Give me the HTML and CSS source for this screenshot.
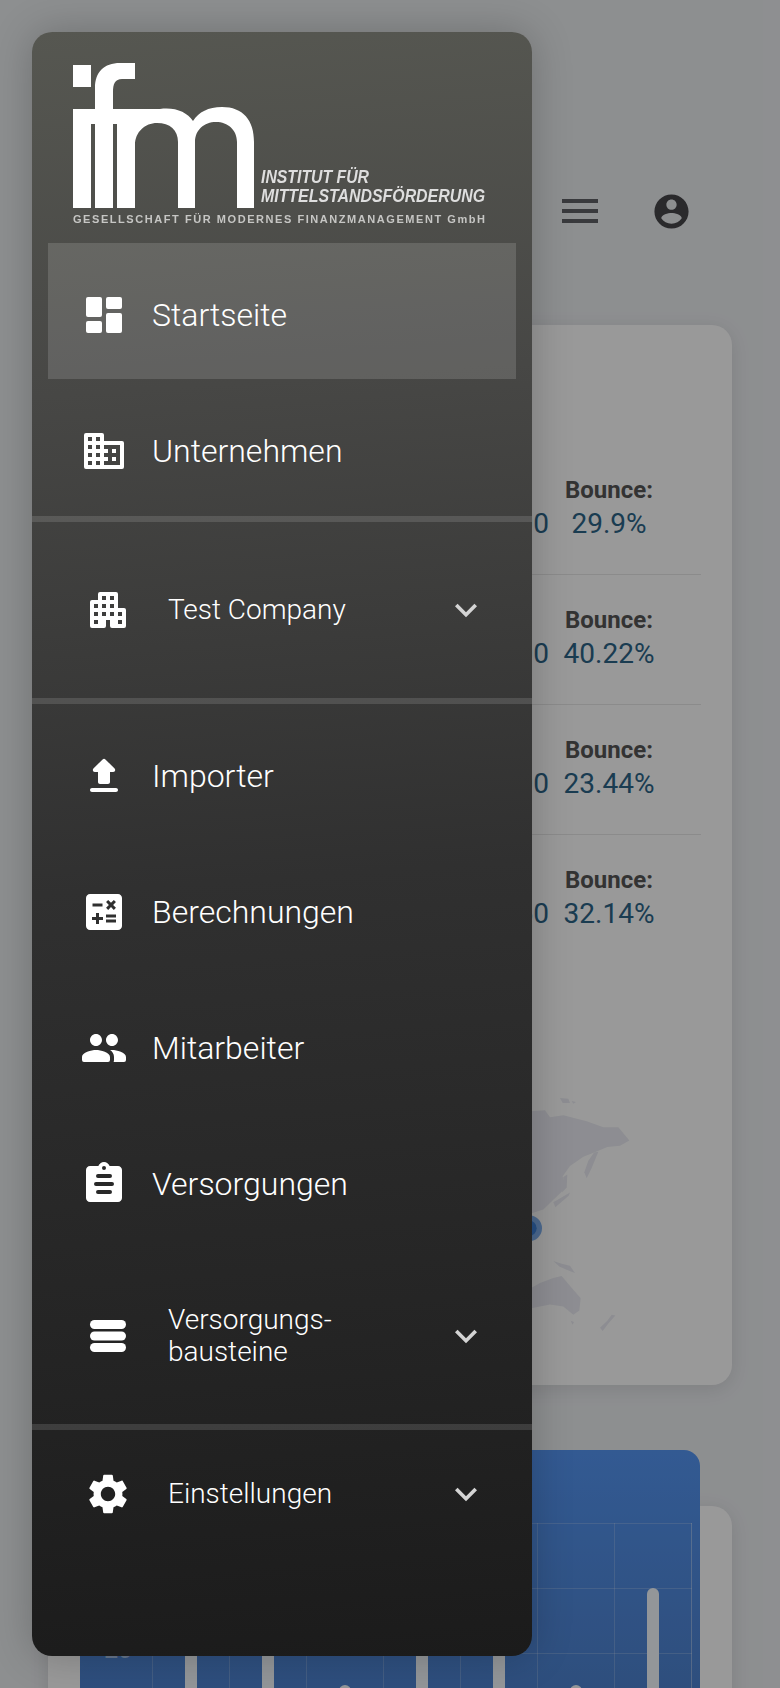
FILE: index.html
```html
<!DOCTYPE html>
<html lang="de">
<head>
<meta charset="utf-8">
<title>IFM Startseite</title>
<link rel="stylesheet" href="styles.css">
</head>
<body>
<div class="page">
  <header class="topbar">
    <div class="burger"><span></span><span></span><span></span></div>
    <svg class="avatar" viewBox="0 0 24 24"><path d="M12 2C6.48 2 2 6.48 2 12s4.48 10 10 10 10-4.48 10-10S17.52 2 12 2zm0 3c1.66 0 3 1.34 3 3s-1.34 3-3 3-3-1.34-3-3 1.34-3 3-3zm0 14.2c-2.5 0-4.71-1.28-6-3.22.03-1.99 4-3.08 6-3.08 1.99 0 5.97 1.09 6 3.08-1.29 1.94-3.5 3.22-6 3.22z"/></svg>
  </header>

  <section class="card card-stats">
    <div class="stat-row">
      <div class="stat"><strong>Users:</strong><span>132300</span></div>
      <div class="stat stat-bounce"><strong>Bounce:</strong><span>29.9%</span></div>
    </div>
    <div class="stat-row">
      <div class="stat"><strong>Users:</strong><span>127100</span></div>
      <div class="stat stat-bounce"><strong>Bounce:</strong><span>40.22%</span></div>
    </div>
    <div class="stat-row">
      <div class="stat"><strong>Users:</strong><span>119900</span></div>
      <div class="stat stat-bounce"><strong>Bounce:</strong><span>23.44%</span></div>
    </div>
    <div class="stat-row">
      <div class="stat"><strong>Users:</strong><span>111560</span></div>
      <div class="stat stat-bounce"><strong>Bounce:</strong><span>32.14%</span></div>
    </div>
    <svg class="map" viewBox="0 0 330 700" preserveAspectRatio="none">
      <path d="M0 155L40 150 75 148 90 165 130 160 200 175 250 190 295 190 328 222 300 235 262 238 228 250 190 262 150 285 128 310 135 340 100 368 70 392 0 410z"/>
      <path d="M222 252L235 250 215 290 200 315 193 300 205 272z"/>
      <path d="M130 312L142 306 140 338 126 350z"/>
      <path d="M100 374L150 350 146 358 106 386z"/>
      <path d="M120 118L145 120 150 130 128 130zM155 125L168 128 160 132z"/>
      <path d="M100 518L125 525 150 530 165 548 140 540 118 532z"/>
      <path d="M0 600L60 572 100 560 125 555 145 575 182 610 178 640 160 650 130 630 90 625 30 635 0 640zM152 665L162 668 158 675z"/>
      <path d="M240 682L262 665 275 650 286 652 265 672 248 690z"/>
      <ellipse class="map-halo" cx="27" cy="438" rx="39" ry="32"/>
      <ellipse class="map-dot" cx="27" cy="438" rx="23" ry="19"/>
    </svg>
  </section>

  <section class="card card-chart">
    <div class="panel">
      <div class="y-axis"><span>20</span></div>
      <div class="chart">
        <i class="bar" style="height: 130px"></i>
        <i class="bar" style="height: 130px"></i>
        <i class="bar" style="height: 65px"></i>
        <i class="bar" style="height: 130px"></i>
        <i class="bar" style="height: 130px"></i>
        <i class="bar" style="height: 65px"></i>
        <i class="bar" style="height: 162px"></i>
      </div>
    </div>
  </section>

  <div class="scrim"></div>

  <aside class="drawer">
    <svg class="logo" viewBox="32 32 500 211" role="img" aria-label="ifm Institut für Mittelstandsförderung">
      <g class="logo-mark">
        <rect x="73" y="65" width="18" height="22"/>
        <path d="M73 109H95V88C95 72 104 63 120 63H135V79H122C115 79 113 84 113 92V109H135V124H113V208H95V124H91V208H73z"/>
        <path d="M117 208V109H160C175 107 187 112 193 121 199 112 208 107 222 107 243 107 254 120 254 142V208H237V142C237 130 228 122 216 122 204 122 195 130 195 142V208H178V142C178 130 170 123 157 123 145 123 135 132 135 145V208z"/>
      </g>
      <text class="logo-title" x="261" y="183" textLength="108" lengthAdjust="spacingAndGlyphs">INSTITUT FÜR</text>
      <text class="logo-title" x="261" y="202" textLength="224" lengthAdjust="spacingAndGlyphs">MITTELSTANDSFÖRDERUNG</text>
      <text class="logo-sub" x="73" y="223" textLength="412">GESELLSCHAFT FÜR MODERNES FINANZMANAGEMENT GmbH</text>
    </svg>

    <nav class="nav">
      <a class="item item-offset active">
        <svg class="icon" viewBox="0 0 24 24"><rect x="3" y="3" width="8" height="10" rx="1"/><rect x="3" y="15" width="8" height="6" rx="1"/><rect x="13" y="11" width="8" height="10" rx="1"/><rect x="13" y="3" width="8" height="6" rx="1"/></svg>
        <span>Startseite</span>
      </a>
      <a class="item item-offset">
        <svg class="icon" viewBox="0 0 24 24"><path d="M12 7V4a1 1 0 0 0-1-1H3a1 1 0 0 0-1 1v16a1 1 0 0 0 1 1h18a1 1 0 0 0 1-1V8a1 1 0 0 0-1-1H12zM6 19H4v-2h2v2zm0-4H4v-2h2v2zm0-4H4V9h2v2zm0-4H4V5h2v2zm4 12H8v-2h2v2zm0-4H8v-2h2v2zm0-4H8V9h2v2zm0-4H8V5h2v2zm10 12h-8v-2h2v-2h-2v-2h2v-2h-2V9h8v10zm-2-8h-2v2h2v-2zm0 4h-2v2h2v-2z"/></svg>
        <span>Unternehmen</span>
      </a>
      <hr class="rule rule-first">
      <a class="group group-company">
        <svg class="icon" viewBox="0 0 24 24"><path d="M17 11V4a1 1 0 0 0-1-1H8a1 1 0 0 0-1 1v3H4a1 1 0 0 0-1 1v12a1 1 0 0 0 1 1h6a1 1 0 0 0 1-1v-3h2v3a1 1 0 0 0 1 1h6a1 1 0 0 0 1-1v-8a1 1 0 0 0-1-1h-3zM7 19H5v-2h2v2zm0-4H5v-2h2v2zm0-4H5V9h2v2zm4 4H9v-2h2v2zm0-4H9V9h2v2zm0-4H9V5h2v2zm4 8h-2v-2h2v2zm0-4h-2V9h2v2zm0-4h-2V5h2v2zm4 12h-2v-2h2v2zm0-4h-2v-2h2v2z"/></svg>
        <span class="group-label">Test Company</span>
        <svg class="chevron" viewBox="0 0 24 24"><path d="M7.41 8.59L12 13.17l4.59-4.58L18 10l-6 6-6-6z"/></svg>
      </a>
      <hr class="rule rule-second">
      <a class="item">
        <svg class="icon" viewBox="0 0 24 24"><path d="M10 16h4c.55 0 1-.45 1-1v-5h1.59c.89 0 1.34-1.08.71-1.71L12.71 3.7c-.39-.39-1.02-.39-1.41 0L6.71 8.29c-.63.63-.19 1.71.7 1.71H9v5c0 .55.45 1 1 1zm-4 2h12c.55 0 1 .45 1 1s-.45 1-1 1H6c-.55 0-1-.45-1-1s.45-1 1-1z"/></svg>
        <span>Importer</span>
      </a>
      <a class="item">
        <svg class="icon" viewBox="0 0 24 24"><path d="M19 3H5c-1.1 0-2 .9-2 2v14c0 1.1.9 2 2 2h14c1.1 0 2-.9 2-2V5c0-1.1-.9-2-2-2zm-5.97 4.06L14.09 6l1.41 1.41L16.91 6l1.06 1.06-1.41 1.41 1.41 1.41-1.06 1.06-1.41-1.4-1.41 1.41-1.06-1.06 1.41-1.41-1.41-1.42zm-6.78.66h5v1.5h-5v-1.5zM11.5 16h-2v2H8v-2H6v-1.5h2v-2h1.5v2h2V16zm6.5 1.25h-5v-1.5h5v1.5zm0-2.5h-5v-1.5h5v1.5z"/></svg>
        <span>Berechnungen</span>
      </a>
      <a class="item">
        <svg class="icon" viewBox="0 0 24 24"><path d="M16 11c1.66 0 2.99-1.34 2.99-3S17.66 5 16 5c-1.66 0-3 1.34-3 3s1.34 3 3 3zm-8 0c1.66 0 2.99-1.34 2.99-3S9.66 5 8 5C6.34 5 5 6.34 5 8s1.34 3 3 3zm0 2c-2.33 0-7 1.17-7 3.5V18a1 1 0 0 0 1 1h12a1 1 0 0 0 1-1v-1.5c0-2.33-4.67-3.5-7-3.5zm8 0c-.29 0-.62.02-.97.05 1.16.84 1.97 1.97 1.97 3.45V18c0 .35-.07.69-.18 1H22a1 1 0 0 0 1-1v-1.5c0-2.33-4.67-3.5-7-3.5z"/></svg>
        <span>Mitarbeiter</span>
      </a>
      <a class="item">
        <svg class="icon" viewBox="0 0 24 24"><path fill-rule="evenodd" d="M19 3h-4.18C14.4 1.84 13.3 1 12 1c-1.3 0-2.4.84-2.82 2H5c-1.1 0-2 .9-2 2v14c0 1.1.9 2 2 2h14c1.1 0 2-.9 2-2V5c0-1.1-.9-2-2-2zM12 3a1 1 0 1 1 0 2 1 1 0 0 1 0-2zM9 7h6a1 1 0 0 1 0 2H9a1 1 0 0 1 0-2zM8 11h8a1 1 0 0 1 0 2H8a1 1 0 0 1 0-2zM9 15h6a1 1 0 0 1 0 2H9a1 1 0 0 1 0-2z"/></svg>
        <span>Versorgungen</span>
      </a>
      <a class="group group-modules">
        <svg class="icon" viewBox="0 0 24 24"><rect x="3" y="4" width="18" height="4.5" rx="2.25"/><rect x="3" y="9.75" width="18" height="4.5" rx="2.25"/><rect x="3" y="15.5" width="18" height="4.5" rx="2.25"/></svg>
        <span class="group-label">Versorgungs-<br>bausteine</span>
        <svg class="chevron" viewBox="0 0 24 24"><path d="M7.41 8.59L12 13.17l4.59-4.58L18 10l-6 6-6-6z"/></svg>
      </a>
      <hr class="rule">
      <a class="group group-settings">
        <svg class="icon" viewBox="0 0 24 24"><path d="M19.14 12.94c.04-.3.06-.61.06-.94 0-.32-.02-.64-.07-.94l2.03-1.58c.18-.14.23-.41.12-.61l-1.92-3.32c-.12-.22-.37-.29-.59-.22l-2.39.96c-.5-.38-1.03-.7-1.62-.94l-.36-2.54c-.04-.24-.24-.41-.48-.41h-3.84c-.24 0-.43.17-.47.41l-.36 2.54c-.59.24-1.13.57-1.62.94l-2.39-.96c-.22-.08-.47 0-.59.22L2.74 8.87c-.12.21-.08.47.12.61l2.03 1.58c-.05.3-.09.63-.09.94s.02.64.07.94l-2.03 1.58c-.18.14-.23.41-.12.61l1.92 3.32c.12.22.37.29.59.22l2.39-.96c.5.38 1.03.7 1.62.94l.36 2.54c.05.24.24.41.48.41h3.84c.24 0 .44-.17.47-.41l.36-2.54c.59-.24 1.13-.56 1.62-.94l2.39.96c.22.08.47 0 .59-.22l1.92-3.32c.12-.22.07-.47-.12-.61l-2.01-1.58zM12 15.6c-1.98 0-3.6-1.62-3.6-3.6s1.62-3.6 3.6-3.6 3.6 1.62 3.6 3.6-1.62 3.6-3.6 3.6z"/></svg>
        <span class="group-label">Einstellungen</span>
        <svg class="chevron" viewBox="0 0 24 24"><path d="M7.41 8.59L12 13.17l4.59-4.58L18 10l-6 6-6-6z"/></svg>
      </a>
    </nav>
  </aside>
</div>
</body>
</html>
```
FILE: styles.css
```css
* { box-sizing: border-box; }
html, body { margin: 0; padding: 0; }
body { font-family: Roboto, "Liberation Sans", sans-serif; }

.page {
  position: relative;
  width: 780px;
  height: 1688px;
  overflow: hidden;
  padding: 0 48px;
  background: #eceef1;
}

/* page behind the drawer */
.topbar {
  display: flex;
  justify-content: flex-end;
  align-items: flex-end;
  gap: 53px;
  height: 325px;
  padding: 0 40px 93px 0;
}
.burger { display: flex; flex-direction: column; gap: 6px; width: 36px; margin-bottom: 9px; }
.burger span { height: 4px; background: #606266; }
.avatar { width: 41px; height: 41px; fill: #46474a; }

.card {
  background: #fff;
  border-radius: 20px;
  box-shadow: 0 4px 20px rgba(0, 0, 0, .1);
}
.card-stats {
  height: 1060px;
  padding: 120px 31px 0;
}
.stat-row {
  display: flex;
  justify-content: flex-end;
  gap: 10px;
  height: 130px;
  padding-top: 30px;
  padding-right: 42px;
  border-bottom: 1px solid #e8e8e8;
}
.stat-row:nth-child(4) { border-bottom: 0; }
.stat {
  display: flex;
  flex-direction: column;
  align-items: flex-end;
  gap: 4px;
  width: 120px;
  font-size: 28px;
  line-height: 30px;
  color: #2c6488;
}
.stat strong { align-self: flex-start; font-size: 24px; color: #555; font-weight: 700; }
.stat-bounce { align-items: center; width: 100px; }
.stat-bounce strong { align-self: center; }
.map {
  display: block;
  width: 110px;
  height: 285px;
  margin: 85px 0 0 441px;
  fill: #ebecf3;
}
.map-halo { fill: #7fb0ee; }
.map-dot { fill: #3f83dc; }

.card-chart {
  display: flex;
  height: 300px;
  margin-top: 121px;
}
.panel {
  display: flex;
  flex: none;
  width: 620px;
  height: 300px;
  margin: -56px 0 0 32px;
  padding: 73px 8px 0 0;
  border-radius: 16px;
  background: linear-gradient(180deg, #5596f4 0%, #4c7ec8 100%);
}
.y-axis {
  flex: none;
  width: 72px;
  padding: 112px 20px 0 0;
  text-align: right;
  font-size: 25px;
  line-height: 30px;
  color: rgba(255, 255, 255, .55);
}
.chart {
  flex: 1;
  display: grid;
  grid-template-columns: repeat(7, 1fr);
  align-items: end;
  justify-items: center;
  border-right: 1px solid rgba(255, 255, 255, .2);
  background-image:
    repeating-linear-gradient(to right, rgba(255, 255, 255, .2) 0 1px, transparent 1px 77px),
    repeating-linear-gradient(to bottom, rgba(255, 255, 255, .2) 0 1px, transparent 1px 65px);
}
.bar {
  display: block;
  width: 12px;
  background: #f6fbff;
  border-radius: 6px 6px 0 0;
}

/* modal */
.scrim {
  position: absolute;
  inset: 0;
  background: rgba(0, 0, 0, .4);
}
.drawer {
  position: absolute;
  top: 32px;
  left: 32px;
  width: 500px;
  height: 1624px;
  border-radius: 20px;
  color: #fff;
  background: linear-gradient(176deg, #565751 0%, #474745 22%, #303030 52%, #252525 78%, #1b1b1b 100%);
  box-shadow: 0 0 40px rgba(0, 0, 0, .22);
  overflow: hidden;
}
.logo { display: block; width: 500px; height: 211px; filter: blur(.4px); }
.logo-mark { fill: #fff; }
.logo-title {
  font-family: "Liberation Sans", Arial, sans-serif;
  font-size: 17.5px;
  font-weight: 700;
  font-style: italic;
  fill: #dedede;
}
.logo-sub {
  font-family: "Liberation Sans", Arial, sans-serif;
  font-size: 11px;
  font-weight: 700;
  fill: #c6c6c4;
}

.nav { display: flex; flex-direction: column; }
.item, .group {
  display: flex;
  align-items: center;
  font-weight: 300;
  color: #fff;
}
.item {
  height: 136px;
  margin: 0 16px;
  padding-left: 32px;
  gap: 24px;
  font-size: 32px;
}
.item-offset { padding-top: 8px; }
.active { background: rgba(255, 255, 255, .14); }
.icon { flex: none; width: 48px; height: 48px; fill: #fff; }
.group {
  padding: 0 44px 0 52px;
  gap: 36px;
  font-size: 28px;
  line-height: 32px;
}
.group-label { flex: 1; }
.chevron { flex: none; width: 44px; height: 44px; fill: #d4d4d4; }
.group-company { height: 176px; }
.group-modules { height: 172px; padding-bottom: 4px; }
.group-settings { height: 128px; }

.rule {
  flex: none;
  width: 100%;
  height: 6px;
  margin: 0;
  border: 0;
  background: rgba(255, 255, 255, .13);
}
.rule-first { margin-top: 1px; }
.rule-second { margin-bottom: 4px; }
```
